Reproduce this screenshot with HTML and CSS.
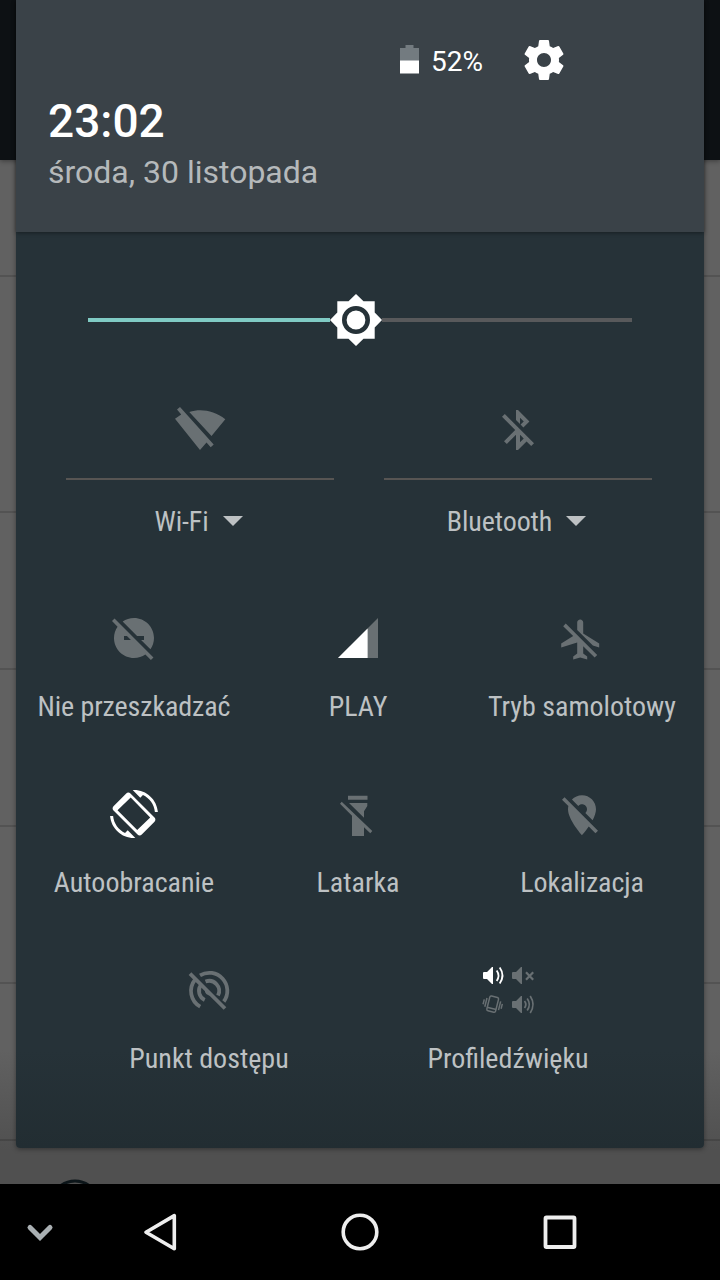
FILE: index.html
```html
<!DOCTYPE html>
<html lang="pl">
<head>
<meta charset="utf-8">
<title>Szybkie ustawienia</title>
<link rel="stylesheet" href="styles.css">
</head>
<body>
<div class="screen">
  <div class="backdrop">
    <div class="app-bar"></div>
    <div class="list-row first"></div>
    <div class="list-row tall"></div>
    <div class="list-row"></div>
    <div class="list-row"></div>
    <div class="list-row"></div>
    <div class="list-row"></div>
    <svg class="list-circle" viewBox="0 0 60 6"><circle cx="30" cy="27" r="24" fill="none" stroke="#0c1519" stroke-width="3"/></svg>
  </div>

  <div class="panel">
    <header class="header">
      <div class="status">
        <svg class="battery" viewBox="0 0 20 30"><path fill="#737b80" d="M5.500 0h8v3H19v13H0V3h5.500z"/><path fill="#fff" d="M0 15.500h19v13H0z"/></svg>
        <span class="percent">52%</span>
        <svg class="gear" viewBox="0 0 24 24"><path d="M19.430 12.980c.04-.32.07-.64.07-.98s-.03-.66-.07-.98l2.110-1.650c.19-.15.24-.42.12-.64l-2-3.460c-.12-.22-.39-.3-.61-.22l-2.490 1c-.52-.4-1.080-.73-1.690-.98l-.38-2.650C14.460 2.180 14.250 2 14 2h-4c-.25 0-.46.18-.49.42l-.38 2.650c-.61.25-1.170.59-1.690.98l-2.490-1c-.23-.09-.49 0-.61.22l-2 3.460c-.13.22-.07.49.12.64l2.110 1.650c-.04.32-.07.65-.07.98s.03.66.07.98l-2.110 1.650c-.19.15-.24.42-.12.64l2 3.460c.12.22.39.3.61.22l2.490-1c.52.4 1.080.73 1.690.98l.38 2.650c.03.24.24.42.49.42h4c.25 0 .46-.18.49-.42l.38-2.650c.61-.25 1.170-.59 1.690-.98l2.490 1c.23.09.49 0 .61-.22l2-3.460c.12-.22.07-.49-.12-.64l-2.110-1.650zM12 15.500c-1.930 0-3.500-1.570-3.500-3.500s1.570-3.500 3.500-3.500 3.500 1.570 3.500 3.500-1.570 3.500-3.500 3.500z"/></svg>
      </div>
      <div class="time">23:02</div>
      <div class="date">środa, 30 listopada</div>
    </header>

    <div class="slider">
      <div class="track done"></div>
      <svg class="thumb" viewBox="-26 -26 52 52"><path fill="#fff" d="M0-26 7.500-18.700h11.200v11.200L26 0l-7.300 7.500v11.200H7.500L0 26l-7.500-7.300h-11.200V7.500L-26 0l7.300-7.500v-11.200h11.200z"/><circle r="11.700" fill="#fff" stroke="#263238" stroke-width="4.600"/></svg>
      <div class="track rest"></div>
    </div>

    <div class="tiles wide">
      <div class="tile">
        <svg class="icon" viewBox="0 0 60 60"><path d="M19.300 12C31 8.500 44 10.500 55.300 19.300L41.500 36zM10 7l33.700 37.500-3 2.800-4.200-4.800L30 50 5 18.800l6.200-4.300-4.200-5z"/></svg>
        <div class="rule"></div>
        <div class="label">Wi-Fi<svg class="caret" viewBox="0 0 20 10"><path d="M0 0h20L10 10z"/></svg></div>
      </div>
      <div class="tile">
        <svg class="icon" viewBox="-3 -3 30 30"><path d="M13 5.830l1.880 1.880-1.600 1.600 1.410 1.410 3.020-3.020L12 2h-1v5.030l2 2v-3.200zM5.410 4L4 5.410 10.590 12 5 17.590 6.410 19 11 14.410V22h1l4.290-4.290 2.300 2.290L20 18.590 5.410 4zM13 18.170v-3.760l1.880 1.880L13 18.170z"/></svg>
        <div class="rule"></div>
        <div class="label">Bluetooth<svg class="caret" viewBox="0 0 20 10"><path d="M0 0h20L10 10z"/></svg></div>
      </div>
    </div>

    <div class="tiles three">
      <div class="tile">
        <svg class="icon" viewBox="-3 -3 30 30"><path d="M17 11v2h-1.460l4.680 4.680C21.340 16.070 22 14.110 22 12c0-5.520-4.480-10-10-10-2.110 0-4.070.66-5.680 1.780L13.540 11H17zM2.270 2.270L1 3.540l2.780 2.780C2.660 7.930 2 9.890 2 12c0 5.520 4.480 10 10 10 2.110 0 4.070-.66 5.680-1.780L20.460 23l1.270-1.270L2.270 2.270zM7 13v-2h1.460l2 2H7z"/></svg>
        <div class="label tight">Nie przeszkadzać</div>
      </div>
      <div class="tile">
        <svg class="icon" viewBox="-3 -3 30 30"><path d="M2 22h20V2z"/><path fill="#fff" d="M2 22h14.800V7.200z"/></svg>
        <div class="label">PLAY</div>
      </div>
      <div class="tile">
        <svg class="icon" viewBox="-2.600 -3.800 30 30"><path d="M13 9V3.500c0-.83-.67-1.500-1.500-1.500S10 2.670 10 3.500v3.680l7.830 7.830L21 16v-2l-8-5zM3 5.270l4.990 4.990L2 14v2l8-2.500V19l-2 1.500V22l3.500-1 3.500 1v-1.500L13 19v-3.730L18.730 21 20 19.730 4.270 4 3 5.270z"/></svg>
        <div class="label">Tryb samolotowy</div>
      </div>
      <div class="tile">
        <svg class="icon on" viewBox="-3 -3 30 30"><path d="M16.480 2.520c3.270 1.550 5.610 4.720 5.970 8.480h1.500C23.440 4.840 18.290 0 12 0l-.66.03 3.810 3.810 1.330-1.320zM7.520 21.480C4.250 19.940 1.910 16.760 1.550 13H.05C.56 19.160 5.710 24 12 24l.66-.03-3.810-3.810z"/><path fill-rule="evenodd" d="M10.230 1.750c-.59-.59-1.540-.59-2.120 0L1.750 8.110c-.59.59-.59 1.540 0 2.120l12.020 12.020c.59.59 1.540.59 2.120 0l6.360-6.360c.59-.59.59-1.540 0-2.120zM10.350 3.750 20.100 13.800 13.600 19.950 3.750 10.100z"/></svg>
        <div class="label">Autoobracanie</div>
      </div>
      <div class="tile">
        <svg class="icon" viewBox="0 0 60 60"><path d="M20 11.700h19.500v4H20zM21 19h18.300v3L36 27.300v6.400zM13.700 17.700 44.300 47l-2 2.300-6.300-6V52H24V31.700l-12-12z"/></svg>
        <div class="label">Latarka</div>
      </div>
      <div class="tile">
        <svg class="icon" viewBox="-3 -3.600 30 30"><path d="M12 6.500c1.380 0 2.500 1.120 2.500 2.500 0 .74-.33 1.390-.83 1.850l3.630 3.630c.98-1.860 1.700-3.800 1.700-5.480 0-3.870-3.130-7-7-7-1.980 0-3.760.83-5.040 2.150l3.190 3.190c.46-.52 1.110-.84 1.850-.84zm4.370 9.600l-4.630-4.630-.11-.11L3.270 3 2 4.270l3.180 3.180C5.070 7.950 5 8.470 5 9c0 5.250 7 13 7 13s1.670-1.850 3.380-4.350L18.730 21 20 19.730l-3.630-3.630z"/></svg>
        <div class="label tight">Lokalizacja</div>
      </div>
    </div>

    <div class="tiles two">
      <div class="tile">
        <svg class="icon" viewBox="0 0 60 60"><g class="arcs"><path d="M21 14.400A18 18 0 0 1 44.800 40.500M16 18.700A18 18 0 0 0 21.200 45.700"/><path d="M26.500 20.600A10 10 0 0 1 39 34.500M21.700 24.300A10 10 0 0 0 25.700 39"/><path d="M11 12.700 46 47.500"/></g><path d="M26 28v3q1 3 4 3.500h3z"/></svg>
        <div class="label">Punkt dostępu</div>
      </div>
      <div class="tile">
        <svg class="icon" viewBox="0 0 60 60">
          <path fill="#fff" d="M5 12q0-1 1-1h3l5-5h1v17h-1l-5-5H6q-1 0-1-1z"/><path class="wave-on" d="M18.700 9.500q3.600 5 0 10.500M21.700 6.500q5.600 8 0 16"/>
          <path d="M34 12q0-1 1-1h3l5-5h1v17h-1l-5-5h-3q-1 0-1-1zM34 41q0-1 1-1h3l5-5h1v17h-1l-5-5h-3q-1 0-1-1z"/>
          <g class="wave"><path stroke-width="2.200" d="m48 11.200 7.200 7.600m0-7.600L48 18.800"/><path d="M46.500 40q2.600 3.500 0 7M49.200 37.500q4.200 6 0 12M52.200 35q5.600 8.500 0 17"/></g>
          <g class="phone" transform="rotate(14 14.500 43)"><rect x="10.200" y="35.500" width="9" height="15.200" rx="1.500"/><path d="M10 47.500h9.400M7.700 38.500v9M5.400 40.500v5M21.800 38.500v9M24 40.500v5"/></g>
        </svg>
        <div class="label">Profiledźwięku</div>
      </div>
    </div>
  </div>

  <nav class="nav">
    <svg viewBox="0 0 80 96"><path d="M30 43.500 40 53.500 50 43.500" fill="none" stroke="#aab0b3" stroke-width="5" stroke-linecap="round"/></svg>
    <svg viewBox="0 0 160 96"><path d="M94.300 31.600v33.200L66 48.200z" fill="none" stroke="#eee" stroke-width="3.600" stroke-linejoin="round"/></svg>
    <svg class="home" viewBox="0 0 240 96"><circle cx="120" cy="48" r="16.800" fill="none" stroke="#eee" stroke-width="3.600"/></svg>
    <svg class="recent" viewBox="0 0 160 96"><rect x="65.500" y="33.500" width="29" height="29.500" rx="1" fill="none" stroke="#eee" stroke-width="3.800"/></svg>
  </nav>
</div>
</body>
</html>
```
FILE: styles.css
```css
body {
  margin: 0;
  background: #000;
  font-family: Roboto, "Noto Sans", sans-serif;
}

svg { display: block; flex: none; }

.screen {
  position: relative;
  display: flex;
  flex-direction: column;
  width: 720px;
  height: 1280px;
  overflow: hidden;
}

.backdrop {
  position: relative;
  height: 1184px;
  box-sizing: border-box;
  overflow: hidden;
  background: linear-gradient(#616161 0, #616161 1050px, #505050 1150px, #505050 100%);
}

.app-bar { height: 160px; background: #0d1114; box-shadow: 0 1px 5px rgba(0, 0, 0, .4); }
.list-row { box-sizing: border-box; height: 157px; border-bottom: 2px solid rgba(0, 0, 0, .14); }
.list-row.first { height: 117px; }
.list-row.tall { height: 236px; }

.list-circle {
  position: absolute;
  left: 45px;
  bottom: 0;
  width: 60px;
  height: 6px;
}

.panel {
  position: absolute;
  top: 0;
  left: 16px;
  width: 688px;
  height: 1148px;
  border-radius: 0 0 4px 4px;
  background: linear-gradient(#263238 0, #263238 1050px, #222d32 1148px);
  box-shadow: 0 1px 5px rgba(0, 0, 0, .4);
}

.header {
  box-sizing: border-box;
  height: 232px;
  padding: 36px 32px 0;
  background: #3a4248;
  box-shadow: 0 1px 4px rgba(0, 0, 0, .4);
}

.status { display: flex; align-items: center; height: 48px; padding-left: 352px; }
.battery { width: 20px; height: 30px; }
.percent {
  box-sizing: border-box;
  width: 100px;
  padding: 3px 0 0 11px;
  color: #fff;
  font-size: 28px;
  line-height: 50px;
}
.gear { width: 48px; height: 48px; fill: #fff; }
.time { margin-top: 9px; color: #fff; font-size: 46px; font-weight: 500; line-height: 56px; }
.date { margin-top: 4px; color: #b5b9bb; font-size: 32px; line-height: 38px; }

.slider { display: flex; align-items: center; height: 52px; margin: 62px 72px 0; }
.track { height: 4px; }
.done { width: 242px; background: #80cbc4; }
.rest { flex: 1; background: #58595b; }
.thumb { width: 52px; height: 52px; }

.tile { display: flex; flex-direction: column; align-items: center; }
.icon { width: 60px; height: 60px; fill: #697073; }
.icon.on { fill: #fff; }
.label {
  display: flex;
  align-items: center;
  justify-content: center;
  margin-top: 23px;
  color: #bdc1c3;
  font-family: "Roboto Condensed", Roboto, sans-serif;
  font-stretch: 75%;
  font-size: 28px;
  line-height: 32px;
  white-space: nowrap;
}
.label.tight { letter-spacing: -.1px; }

.wide { display: grid; grid-template-columns: 268px 268px; gap: 50px; margin: 54px 0 0 50px; }
.wide .label { margin: 26px 3px 0 0; letter-spacing: -.1px; }
.rule { align-self: stretch; height: 2px; margin-top: 18px; background: #575553; }
.caret { width: 20px; height: 10px; margin: -2px 0 0 14px; fill: #bdc1c3; }

.three { display: grid; grid-template-columns: repeat(3, 224px); grid-auto-rows: 176px; margin: 70px 0 0 6px; }
.two { display: grid; grid-template-columns: repeat(2, 299px); margin: 1px 0 0 43.500px; }
.two .label { margin-top: 22px; }

.arcs { fill: none; stroke: #697073; stroke-width: 3.800; }
.wave-on { fill: none; stroke: #fff; stroke-width: 1.800; }
.wave { fill: none; stroke: #697073; stroke-width: 1.700; }
.phone { fill: none; stroke: #697073; stroke-width: 1.500; }

.nav { display: flex; height: 96px; background: #000; }
.nav svg { width: 160px; height: 96px; }
.nav svg:first-child { width: 80px; }
.nav .home { width: 240px; }
```
